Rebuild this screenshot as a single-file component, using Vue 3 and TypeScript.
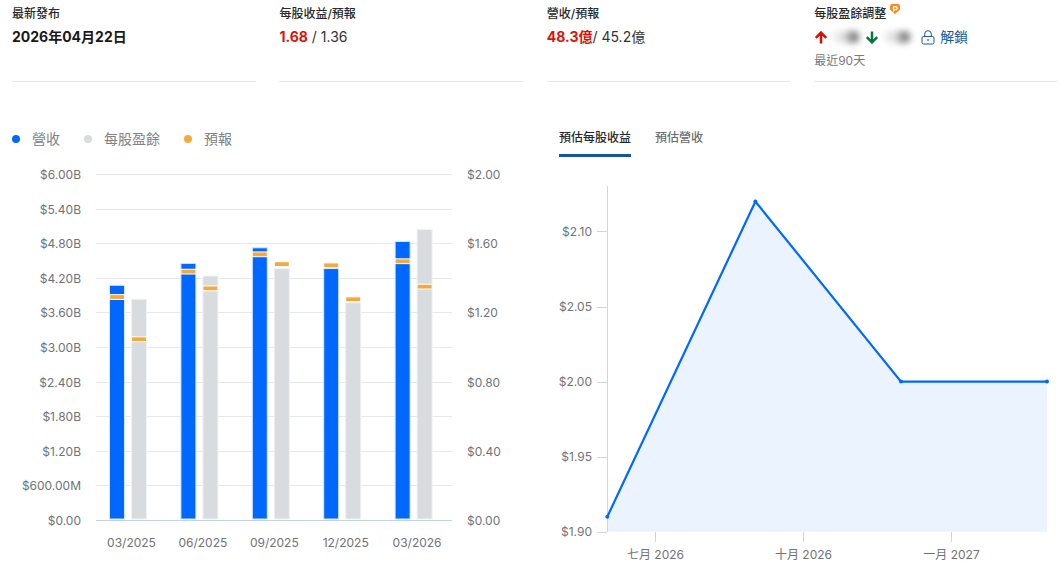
<script setup lang="ts">
// 財報摘要：上方四欄數據，左邊營收/每股盈餘柱狀圖，右邊預估折線圖

interface Quarter {
  label: string
  revenue: number
  revenueEst: number
  eps: number
  epsEst: number
}

const quarters: Quarter[] = [
  { label: '03/2025', revenue: 4.07, revenueEst: 3.9, eps: 1.276, epsEst: 1.056 },
  { label: '06/2025', revenue: 4.45, revenueEst: 4.34, eps: 1.41, epsEst: 1.35 },
  { label: '09/2025', revenue: 4.72, revenueEst: 4.64, eps: 1.453, epsEst: 1.49 },
  { label: '12/2025', revenue: 4.36, revenueEst: 4.45, eps: 1.256, epsEst: 1.287 },
  { label: '03/2026', revenue: 4.83, revenueEst: 4.52, eps: 1.68, epsEst: 1.36 },
]

const BASE_Y = 520
const revY = (v: number) => BASE_Y - v * (346 / 6)
const epsY = (v: number) => BASE_Y - v * 173
const groupX = (i: number) => 128 + i * 71.4
// 1px 線條對齊像素
const crisp = (v: number) => Math.round(v) + 0.5

const leftTicks = ['$0.00', '$600.00M', '$1.20B', '$1.80B', '$2.40B', '$3.00B', '$3.60B', '$4.20B', '$4.80B', '$5.40B', '$6.00B']
const rightTicks = ['$0.00', '$0.40', '$0.80', '$1.20', '$1.60', '$2.00']

const estY = (v: number) => 531.7 - (v - 1.9) * 1501
const estTicks = [1.9, 1.95, 2.0, 2.05, 2.1]
const estPoints = [
  { x: 607.3, v: 1.91 },
  { x: 755.4, v: 2.12 },
  { x: 901, v: 2.0 },
  { x: 1047, v: 2.0 },
]
const linePath = estPoints.map((p) => `${p.x},${estY(p.v)}`).join(' ')
const areaPath = `607.3,531.7 ${linePath} 1047,531.7`
const monthTicks = [
  { x: 655.5, label: '七月 2026' },
  { x: 803.5, label: '十月 2026' },
  { x: 951.5, label: '一月 2027' },
]
</script>

<template>
  <div class="page">
    <section class="stats">
      <div class="stat">
        <div class="stat-label">最新發布</div>
        <div class="stat-value strong">2026年04月22日</div>
      </div>
      <div class="stat">
        <div class="stat-label">每股收益/預報</div>
        <div class="stat-value"><b class="beat">1.68</b> / 1.36</div>
      </div>
      <div class="stat">
        <div class="stat-label">營收/預報</div>
        <div class="stat-value"><b class="beat">48.3億</b>/ 45.2億</div>
      </div>
      <div class="stat">
        <div class="stat-label">
          每股盈餘調整
          <svg class="pro" width="10" height="10" viewBox="0 0 10 10">
            <path d="M2.2 0h5.6A2.2 2.2 0 0 1 10 2.2v3.2L5 10 0 5.4V2.2A2.2 2.2 0 0 1 2.2 0z" fill="#fb8b1e" />
            <path d="M3.6 7.4V2.6h2a1.5 1.5 0 0 1 0 3.1h-2" fill="none" stroke="#fff" stroke-width="1.3" />
          </svg>
        </div>
        <div class="stat-value revisions">
          <svg class="arrow" width="14" height="13" viewBox="0 0 14 13">
            <path d="M7 12.5V1.6M1.8 6.8 7 1.6l5.2 5.2" fill="none" stroke="#d90d06" stroke-width="2.5" />
          </svg>
          <span class="blurred"></span>
          <svg class="arrow" width="14" height="13" viewBox="0 0 14 13">
            <path d="M7 .5v10.9M1.8 6.2 7 11.4l5.2-5.2" fill="none" stroke="#06783c" stroke-width="2.5" />
          </svg>
          <span class="blurred"></span>
          <a class="unlock">
            <svg width="14" height="15" viewBox="0 0 14 15">
              <path d="M3.7 6.5V4a3.3 3.3 0 0 1 6.6 0v2.5" fill="none" stroke="#1a5a9e" />
              <rect x="1" y="6.5" width="12" height="7.5" rx="1.5" fill="none" stroke="#1a5a9e" />
              <path d="M7 9v2" stroke="#1a5a9e" stroke-width="1.2" />
            </svg>
            解鎖
          </a>
        </div>
        <div class="stat-note">最近90天</div>
      </div>
    </section>

    <section class="charts">
      <div class="bar-panel">
        <div class="legend">
          <span class="legend-item"><i class="dot revenue"></i>營收</span>
          <span class="legend-item"><i class="dot eps"></i>每股盈餘</span>
          <span class="legend-item"><i class="dot est"></i>預報</span>
        </div>
        <svg class="bar-chart" width="547" height="409" viewBox="0 160 547 409">
          <g v-for="(t, i) in leftTicks" :key="t">
            <line
              x1="96"
              x2="452"
              :y1="crisp(BASE_Y - i * 34.6)"
              :y2="crisp(BASE_Y - i * 34.6)"
              :stroke="i === 0 ? '#c3d4ea' : '#e6e8eb'"
            />
            <text class="axis" x="81" :y="BASE_Y - i * 34.6 + 5" text-anchor="end">{{ t }}</text>
          </g>
          <text
            v-for="(t, i) in rightTicks"
            :key="t"
            class="axis"
            x="467"
            :y="BASE_Y - i * 69.2 + 5"
          >{{ t }}</text>

          <g v-for="(q, i) in quarters" :key="q.label">
            <rect class="bar-blue" :x="groupX(i) - 18.5" :y="revY(q.revenue)" width="15" :height="BASE_Y - 1 - revY(q.revenue)" />
            <rect class="marker" :x="groupX(i) - 18.5" :y="revY(q.revenueEst) - 0.5" width="15" height="4.8" />
            <rect class="bar-gray" :x="groupX(i) + 3.5" :y="epsY(q.eps)" width="15" :height="BASE_Y - 1 - epsY(q.eps)" />
            <rect class="marker" :x="groupX(i) + 3.5" :y="epsY(q.epsEst) - 0.5" width="15" height="4.8" />
            <text class="axis" :x="groupX(i) + 3.5" y="547" text-anchor="middle">{{ q.label }}</text>
          </g>
        </svg>
      </div>

      <div class="line-panel">
        <div class="tabs">
          <span class="tab active">預估每股收益</span>
          <span class="tab">預估營收</span>
        </div>
        <svg class="line-chart" width="514" height="413" viewBox="547 156 514 413">
          <polygon :points="areaPath" fill="#ebf3ff" />
          <line x1="607.5" x2="607.5" y1="186" y2="532" stroke="#ccd6e3" />
          <g v-for="t in estTicks" :key="t">
            <line x1="597" x2="607" :y1="crisp(estY(t))" :y2="crisp(estY(t))" stroke="#ccd6e3" />
            <text class="axis" x="592" :y="estY(t) + 4" text-anchor="end">${{ t.toFixed(2) }}</text>
          </g>
          <g v-for="m in monthTicks" :key="m.label">
            <line :x1="m.x" :x2="m.x" y1="532" y2="542" stroke="#ccd6e3" />
            <text class="axis" :x="m.x" y="559" text-anchor="middle">{{ m.label }}</text>
          </g>
          <polyline :points="linePath" fill="none" stroke="#0068ff" stroke-width="2.2" />
          <circle v-for="p in estPoints" :key="p.x" :cx="p.x" :cy="estY(p.v)" r="2" fill="#0068ff" />
        </svg>
      </div>
    </section>
  </div>
</template>

<style scoped>
.page {
  width: 1061px;
  height: 569px;
  overflow: hidden;
  background: #fff;
  color: #1a1a1a;
  font-family: Inter, "Noto Sans CJK TC", sans-serif;
}

.stats {
  display: grid;
  grid-template-columns: repeat(4, 243.7px);
  column-gap: 23.7px;
  padding-left: 12px;
}

.stat {
  height: 82px;
  box-sizing: border-box;
  padding-top: 6px;
  border-bottom: 1px solid #e6e8eb;
}

.stat-label {
  position: relative;
  font-size: 12px;
  font-weight: 500;
  line-height: 16px;
  color: #26282b;
}

.pro {
  position: absolute;
  top: -2px;
  left: 76px;
}

.stat-value {
  margin-top: 5px;
  font-size: 14px;
  line-height: 20px;
  color: #333;
}

.stat-value.strong {
  font-weight: 700;
  color: #1a1a1a;
}

.beat {
  font-weight: 700;
  color: #dd1209;
}

.revisions {
  display: flex;
  align-items: center;
}

.arrow {
  flex: none;
}

.blurred {
  width: 28px;
  height: 12px;
  margin: 0 5px 0 4px;
  border-radius: 6px;
  background: linear-gradient(90deg, #f2f2f2, #dedede 45%, #7f7f7f 75%, #9a9a9a);
  filter: blur(3px);
}

.unlock {
  display: flex;
  align-items: center;
  gap: 5px;
  margin-left: 5px;
  color: #1a5a9e;
}

.stat-note {
  margin-top: 6px;
  font-size: 12px;
  line-height: 16px;
  color: #7a7a7a;
}

.charts {
  display: flex;
}

.bar-panel {
  flex: none;
  width: 547px;
}

.legend {
  display: flex;
  gap: 24px;
  height: 78px;
  box-sizing: border-box;
  padding: 47px 0 0 12px;
  font-size: 14px;
  line-height: 20px;
  color: #808285;
}

.legend-item {
  display: flex;
  align-items: center;
  height: 20px;
}

.dot {
  width: 8px;
  height: 8px;
  margin-right: 12px;
  border-radius: 50%;
}

.dot.revenue {
  background: #0068ff;
}

.dot.eps {
  background: #d9dcdf;
}

.dot.est {
  background: #f4a93c;
}

.bar-blue {
  fill: #0068ff;
  stroke: #d6e6ff;
}

.bar-gray {
  fill: #d9dcdf;
  stroke: #f0f1f3;
}

.marker {
  fill: #f4a93c;
  stroke: #fff;
}

.axis {
  font-size: 12px;
  fill: #6f7378;
}

.tabs {
  display: flex;
  gap: 24px;
  height: 74px;
  box-sizing: border-box;
  padding: 47px 0 0 12px;
}

.tab {
  height: 25px;
  font-size: 12px;
  font-weight: 500;
  line-height: 18px;
  color: #6b6e72;
}

.tab.active {
  color: #26282b;
  border-bottom: 3px solid #16549c;
}

.line-chart {
  display: block;
}
</style>
